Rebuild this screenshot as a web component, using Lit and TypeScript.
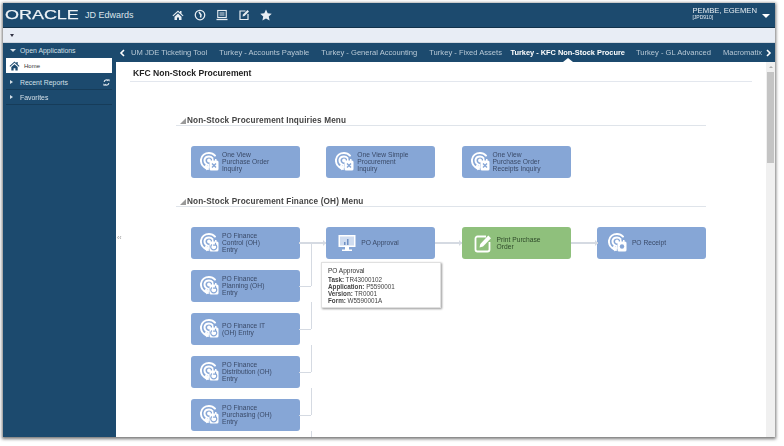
import { LitElement, html, css, svg } from "lit";
import { customElement } from "lit/decorators.js";

const arcs = svg`<g fill="none" stroke="#fff" stroke-linecap="round">
  <path stroke-width="2" d="M8 17C3 15.500 .6 11.500 1 7.500 1.500 3.500 5 1 9 1c2.500 0 4.600 1 6 2.600"/>
  <path stroke-width="2" d="M8.500 13C6 12.500 4.300 10 4.500 8 4.800 5.800 6.800 4.500 9 4.500c1.500 0 2.700.6 3.500 1.600"/>
</g>
<circle cx="9" cy="8.500" r="1.900" fill="#fff"/>
<path d="M3.500 15l3.500 3.500v-2.500h2.500v-2H7v-2.500z" fill="#fff" opacity=".95"/>`;

function nodeIcon(kind: string) {
  if (kind === "monitor")
    return html`<svg class="icon" viewBox="0 0 20 20"><rect x="1.500" y="2" width="17" height="12" fill="#fff"/><rect x="3" y="3.500" width="14" height="9" fill="#cfdcf0"/><path d="M7 12v-3h1.500v3zM10 12V6h1.500v6z" fill="#6f90c4"/><path d="M8 14h4v2.500h3V18H5v-1.500h3z" fill="#fff"/></svg>`;
  if (kind === "edit")
    return html`<svg class="icon" viewBox="0 0 20 20"><path d="M13 3.500H4.500A2 2 0 0 0 2.500 5.500v11a2 2 0 0 0 2 2h10a2 2 0 0 0 2-2V9" fill="none" stroke="#fff" stroke-width="1.800"/><path d="M6.500 14.500l.8-3.500 8-8.500 2.700 2.700-8 8.300z" fill="#fff"/></svg>`;
  const glyph =
    kind === "x"
      ? svg`<path d="M12 11.500l4 4m0-4l-4 4" stroke="#86a6d6" stroke-width="1.400" fill="none"/>`
      : kind === "gear"
        ? svg`<circle cx="14" cy="13.500" r="2.200" fill="#86a6d6"/>`
        : svg`<path d="M12 11.500a3 3 0 1 0 3.500 0M15.500 9.800v2.400h-2.400" stroke="#86a6d6" stroke-width="1.200" fill="none"/>`;
  return html`<svg class="icon" viewBox="0 0 20 20">${arcs}<rect x="9.500" y="8.500" width="9" height="10" rx="1.600" fill="#fff"/><rect x="12" y="7" width="1.500" height="2" fill="#fff"/><rect x="15" y="7" width="1.500" height="2" fill="#fff"/>${glyph}</svg>`;
}

@customElement("app-root")
export class AppRoot extends LitElement {
  static styles = css`
    :host { display: block; width: 784px; height: 446px; background: #fff; overflow: hidden; font-family: "Liberation Sans", Arial, sans-serif; }
    * { box-sizing: border-box; }
    .page { width: 784px; height: 446px; padding: 3px 9px 9px 3px; filter: blur(0.4px); }
    .win { width: 772px; height: 434px; display: flex; flex-direction: column; box-shadow: 0 1px 3px 1px #777; background: #fff; overflow: hidden; }
    .hdr { height: 25px; flex: none; background: #1c4a6e; color: #fff; display: flex; align-items: center; border-bottom: 1px solid #12324b; position: relative; }
    .logo { font-size: 13.500px; width: 76px; margin-left: 2px; transform: scaleX(1.33); transform-origin: left center; color: #eef3f6; line-height: 1; -webkit-text-stroke: .25px #eef3f6; }
    .jde { font-size: 9px; margin-left: 4px; color: #dbe4ea; white-space: nowrap; }
    .hicons { display: flex; gap: 10px; margin-left: 38px; align-items: center; }
    .hicons svg { width: 12px; height: 12px; display: block; }
    .user { margin-left: auto; margin-right: 18px; line-height: 1; color: #e6edf2; margin-top: -3px; }
    .uname { font-size: 7.700px; }
    .uid { font-size: 5px; margin-top: 0; }
    .ucaret { position: absolute; right: 5px; top: 11px; width: 0; height: 0; border: 4px solid transparent; border-top-color: #fff; border-bottom: 0; }
    .strip { height: 15px; flex: none; background: #e8edf5; border-bottom: 1px solid #cfd6df; display: flex; align-items: center; padding-left: 7px; }
    .strip i { width: 0; height: 0; border: 2px solid transparent; border-top: 3px solid #334; border-bottom: 0; }
    .body { flex: 1; display: flex; min-height: 0; }
    .side { width: 113px; flex: none; background: #1c4a6e; color: #d5e0e8; font-size: 6.900px; padding-left: 3px; padding-right: 4px; }
    .srow { height: 15px; display: flex; align-items: center; padding-left: 4px; gap: 5px; border-bottom: 1px solid #163c59; }
    .srow.open { border: 0; }
    .srow .right { margin-left: auto; margin-right: 2px; }
    .home { height: 15px; background: #fff; color: #333; display: flex; align-items: center; gap: 4px; padding-left: 3px; font-size: 6px; margin-bottom: 2px; }
    .home svg { width: 11px; height: 10px; }
    .tri { width: 0; height: 0; border: 2.500px solid transparent; border-left: 3px solid #d5e0e8; border-right: 0; }
    .tri.down { border: 3px solid transparent; border-top: 3px solid #d5e0e8; border-bottom: 0; }
    .ref { width: 7px; height: 7px; }
    .srow .lbl { margin-left: 2px; }
    .srow.open .lbl { margin-left: -1px; }
    .main { flex: 1; display: flex; flex-direction: column; min-width: 0; }
    .tabs { height: 19px; flex: none; background: #1c4a6e; color: #b8c9d6; font-size: 7.600px; display: flex; align-items: center; position: relative; padding-left: 15px; white-space: nowrap; overflow: hidden; }
    .tab { margin-right: 12px; }
    .tab.on { color: #fff; font-weight: 700; font-size: 7.400px; margin-right: 11px; margin-left: -3.500px; }
    .notch { position: absolute; left: 447px; bottom: 0; width: 0; height: 0; border: 5px solid transparent; border-bottom: 4px solid #fff; border-top: 0; }
    .chev { position: absolute; top: 6px; width: 7px; height: 8px; }
    .pane { flex: 1; display: flex; min-height: 0; position: relative; overflow: hidden; }
    .content { flex: 1; min-width: 0; padding: 0 14px; }
    .title { height: 20px; border-bottom: 1px solid #e3e7ee; font-size: 8.600px; font-weight: 700; color: #222; padding: 5px 0 0 3px; line-height: 12px; }
    .sec { padding: 0 46px; }
    .h { height: 12px; margin-top: 32px; border-bottom: 1px solid #dfe4ea; font-size: 8.200px; font-weight: 700; letter-spacing: .15px; color: #444; padding-left: 11px; line-height: 14px; position: relative; white-space: nowrap; }
    .h.second { margin-top: 17px; }
    .h::before { content: ""; position: absolute; left: 4px; top: 4px; width: 0; height: 0; border-style: solid; border-width: 0 0 6px 6px; border-color: transparent transparent #999 transparent; }
    .grid { display: grid; grid-template-columns: repeat(4, 109px); column-gap: 26.300px; row-gap: 11px; grid-auto-rows: 32px; margin: 20px 0 0 15px; position: relative; }
    .node { background: #86a6d6; border-radius: 3px; display: flex; align-items: center; padding-left: 9px; gap: 2px; color: #3a4a68; font-size: 6.700px; line-height: 6.800px; }
    .node .lines { padding-top: 1px; }
    .node.wide { padding-left: 11px; gap: 4px; }
    .node.green { background: #8fc07c; color: #2f4a2a; }
    .node.c1 { grid-column: 1; }
    .icon { width: 20px; height: 20px; flex: none; }
    .ln { position: absolute; background: #d5dae2; }
    .arrow { position: absolute; width: 0; height: 0; border: 3px solid transparent; border-left: 3px solid #d5dae2; border-right: 0; }
    .tip { position: absolute; left: 130px; top: 35px; width: 120px; height: 46px; background: #fff; border: 1px solid #e0e0e0; box-shadow: 1px 1px 2px #999; padding: 4px 6px; font-size: 6.300px; line-height: 7px; color: #444; }
    .tip .t { margin-bottom: 2px; color: #333; font-size: 6.500px; }
    .tip b { font-weight: 700; }
    .sbar { width: 9px; flex: none; background: #f0f0f0; position: relative; }
    .sbar .up { position: absolute; left: 2.500px; top: 4px; width: 0; height: 0; border: 2px solid transparent; border-bottom: 2px solid #aaa; border-top: 0; }
    .sbar .thumb { position: absolute; left: 1px; top: 10px; width: 7px; height: 91px; background: #c4c4c4; }
    .grip { position: absolute; left: 1px; top: 172px; color: #999; font-size: 7px; line-height: 1; }
  `;

  private line(x: number, y: number, w: number, h: number) {
    return html`<div class="ln" style="left:${x}px;top:${y}px;width:${w}px;height:${h}px"></div>`;
  }
  private arrow(x: number, y: number) {
    return html`<div class="arrow" style="left:${x}px;top:${y}px"></div>`;
  }
  private node(kind: string, lines: string[], cls = "") {
    return html`<div class="node ${cls}">${nodeIcon(kind)}<div class="lines">${lines.map((l) => html`<div>${l}</div>`)}</div></div>`;
  }

  render() {
    return html`<div class="page"><div class="win">
      <div class="hdr">
        <div class="logo">ORACLE</div>
        <div class="jde">JD Edwards</div>
        <div class="hicons">
          <svg viewBox="0 0 24 24" fill="#e8eef3"><path d="M12 3L1 13l1.500 1.500L12 6l9.500 8.500L23 13l-4-3.600V4h-3v2.700zM5 15.500V22h5v-5h4v5h5v-6.500L12 9z"/></svg>
          <svg viewBox="0 0 24 24" fill="none" stroke="#e8eef3"><circle cx="12" cy="12" r="9.500" stroke-width="2.500"/><path d="M10 6l4 6-1 5" stroke-width="3"/></svg>
          <svg viewBox="0 0 24 24" fill="none" stroke="#e8eef3" stroke-width="2.200"><rect x="3.500" y="3" width="17" height="14"/><path d="M7 8h10M7 12h10" stroke-width="1.800"/><path d="M1 21h22" stroke-width="2.600"/></svg>
          <svg viewBox="0 0 24 24" fill="none" stroke="#e8eef3" stroke-width="2.400"><path d="M15 4H4v17h16V10"/><path d="M9 15l1-4 9-9 3 3-9 9z" fill="#e8eef3" stroke="none"/></svg>
          <svg viewBox="0 0 24 24" fill="#e8eef3"><path d="M12 1l3.400 7.500 8.100.9-6 5.500 1.700 8.100L12 19l-7.200 4 1.700-8.100-6-5.500 8.100-.9z"/></svg>
        </div>
        <div class="user"><div class="uname">PEMBE, EGEMEN</div><div class="uid">[JPD910]</div></div>
        <div class="ucaret"></div>
      </div>
      <div class="strip"><i></i></div>
      <div class="body">
        <div class="side">
          <div class="srow open"><span class="tri down"></span><span class="lbl">Open Applications</span></div>
          <div class="home">
            <svg viewBox="0 0 24 22" fill="#1c4a6e"><path d="M12 1L1 11l1.500 1.500L12 4l9.500 8.500L23 11l-4-3.600V2h-3v2.700zM5 13v8h5v-5h4v5h5v-8l-7-6z"/></svg>
            Home
          </div>
          <div class="srow"><span class="tri"></span><span class="lbl">Recent Reports</span>
            <svg class="right ref" viewBox="0 0 12 12" fill="none" stroke="#e0e8ee" stroke-width="2"><path d="M2 5a4 4 0 0 1 7-2M10 7a4 4 0 0 1-7 2"/><path d="M8 1l3 0 0 3z" fill="#e0e8ee" stroke-width=".5"/><path d="M4 11l-3 0 0-3z" fill="#e0e8ee" stroke-width=".5"/></svg></div>
          <div class="srow"><span class="tri"></span><span class="lbl">Favorites</span></div>
        </div>
        <div class="main">
          <div class="tabs">
            <svg class="chev" style="left:3px" viewBox="0 0 7 8" fill="none" stroke="#fff" stroke-width="1.600"><path d="M5 1L2 4l3 3"/></svg>
            <span class="tab">UM JDE Ticketing Tool</span>
            <span class="tab">Turkey - Accounts Payable</span>
            <span class="tab">Turkey - General Accounting</span>
            <span class="tab">Turkey - Fixed Assets</span>
            <span class="tab on">Turkey - KFC Non-Stock Procure</span>
            <span class="tab">Turkey - GL Advanced</span>
            <span class="tab">Macromatix</span>
            <svg class="chev" style="right:3px" viewBox="0 0 7 8" fill="none" stroke="#fff" stroke-width="1.600"><path d="M2 1l3 3-3 3"/></svg>
            <div class="notch"></div>
          </div>
          <div class="pane">
            <div class="grip">‹‹</div>
            <div class="content">
              <div class="title">KFC Non-Stock Procurement</div>
              <div class="sec">
                <div class="h">Non-Stock Procurement Inquiries Menu</div>
                <div class="grid">
                  ${this.node("x", ["One View", "Purchase Order", "Inquiry"])}
                  ${this.node("x", ["One View Simple", "Procurement", "Inquiry"])}
                  ${this.node("x", ["One View", "Purchase Order", "Receipts Inquiry"])}
                </div>
                <div class="h second">Non-Stock Procurement Finance (OH) Menu</div>
                <div class="grid">
                  ${this.line(108, 15, 27, 2)}${this.arrow(132, 13)}
                  ${this.line(244, 15, 27, 2)}${this.arrow(268, 13)}
                  ${this.line(380, 15, 27, 2)}${this.arrow(404, 13)}
                  ${this.line(120, 16, 1, 43)}
                  ${this.line(108, 59, 12, 1)}${this.line(120, 75, 1, 27)}
                  ${this.line(108, 102, 12, 1)}${this.line(120, 118, 1, 27)}
                  ${this.line(108, 145, 12, 1)}${this.line(120, 161, 1, 27)}
                  ${this.line(108, 188, 12, 1)}${this.line(120, 204, 1, 6)}
                  ${this.node("arrow", ["PO Finance", "Control (OH)", "Entry"])}
                  ${this.node("monitor", ["PO Approval"], "wide")}
                  ${this.node("edit", ["Print Purchase", "Order"], "green wide")}
                  ${this.node("gear", ["PO Receipt"], "wide")}
                  ${this.node("arrow", ["PO Finance", "Planning (OH)", "Entry"], "c1")}
                  ${this.node("arrow", ["PO Finance IT", "(OH) Entry"], "c1")}
                  ${this.node("arrow", ["PO Finance", "Distribution (OH)", "Entry"], "c1")}
                  ${this.node("arrow", ["PO Finance", "Purchasing (OH)", "Entry"], "c1")}
                  <div class="tip">
                    <div class="t">PO Approval</div>
                    <div><b>Task:</b> TR43000102</div>
                    <div><b>Application:</b> P5590001</div>
                    <div><b>Version:</b> TR0001</div>
                    <div><b>Form:</b> W5590001A</div>
                  </div>
                </div>
              </div>
            </div>
            <div class="sbar"><div class="up"></div><div class="thumb"></div></div>
          </div>
        </div>
      </div>
    </div></div>`;
  }
}
